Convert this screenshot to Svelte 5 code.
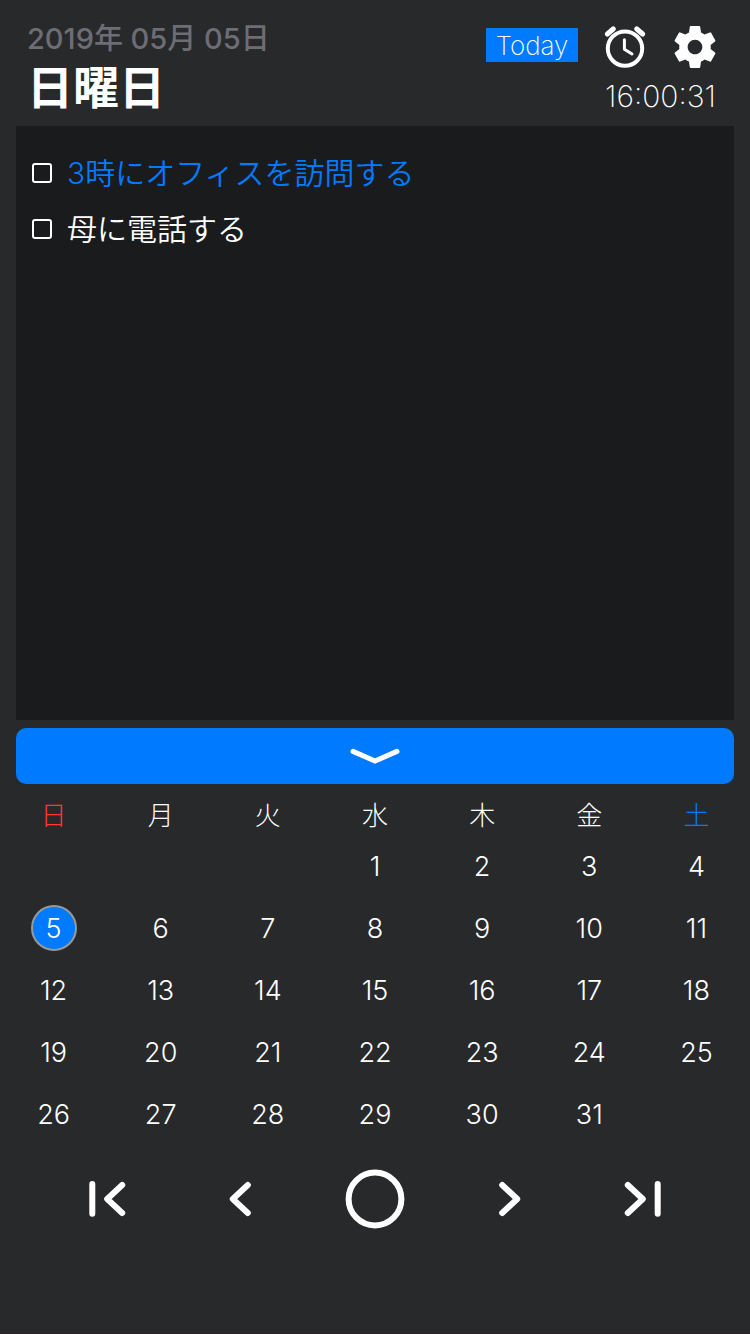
<script>
  const tasks = $state([
    { id: 1, text: '3時にオフィスを訪問する', highlighted: true, done: false },
    { id: 2, text: '母に電話する', highlighted: false, done: false }
  ]);

  const weekdays = ['日', '月', '火', '水', '木', '金', '土'];
  const leadingBlanks = 3;
  const cells = [
    ...Array.from({ length: leadingBlanks }, () => null),
    ...Array.from({ length: 31 }, (_, i) => i + 1),
    null
  ];
  const weeks = Array.from({ length: 5 }, (_, i) => cells.slice(i * 7, i * 7 + 7));

  let selected = $state(5);
</script>

<main class="app">
  <header class="header">
    <div class="date">
      <p class="full-date">2019年 05月 05日</p>
      <h1 class="weekday">日曜日</h1>
    </div>
    <div class="tools">
      <div class="actions">
        <button class="today" type="button">Today</button>
        <button class="icon-button" type="button" aria-label="アラーム">
          <svg width="42" height="42" viewBox="0 0 42 42" fill="none" stroke="#fff" stroke-linecap="round" stroke-linejoin="round">
            <circle cx="21" cy="22.6" r="17.2" stroke-width="4" />
            <path d="M20.4 13.8v9.4l7.6 4.8" stroke-width="3" />
            <path d="M3.4 8 9.2 3M38.6 8 32.8 3" stroke-width="5" />
          </svg>
        </button>
        <button class="icon-button" type="button" aria-label="設定">
          <svg width="42" height="42" viewBox="2 2 20 20" fill="#fff">
            <path d="M19.43 12.98c.04-.32.07-.64.07-.98s-.03-.66-.07-.98l2.11-1.65c.19-.15.24-.42.12-.64l-2-3.46c-.12-.22-.39-.3-.61-.22l-2.49 1c-.52-.4-1.08-.73-1.69-.98l-.38-2.65C14.46 2.18 14.25 2 14 2h-4c-.25 0-.46.18-.49.42l-.38 2.65c-.61.25-1.17.59-1.69.98l-2.49-1c-.23-.09-.49 0-.61.22l-2 3.46c-.13.22-.07.49.12.64l2.11 1.65c-.04.32-.07.65-.07.98s.03.66.07.98l-2.11 1.65c-.19.15-.24.42-.12.64l2 3.46c.12.22.39.3.61.22l2.49-1c.52.4 1.08.73 1.69.98l.38 2.65c.03.24.24.42.49.42h4c.25 0 .46-.18.49-.42l.38-2.65c.61-.25 1.17-.59 1.69-.98l2.49 1c.23.09.49 0 .61-.22l2-3.46c.12-.22.07-.49-.12-.64l-2.11-1.65zM12 15.5c-1.93 0-3.5-1.57-3.5-3.5s1.57-3.5 3.5-3.5 3.5 1.57 3.5 3.5-1.57 3.5-3.5 3.5z" />
          </svg>
        </button>
      </div>
      <time class="clock">16:00:31</time>
    </div>
  </header>

  <ul class="tasks">
    {#each tasks as task (task.id)}
      <li>
        <label class="task" class:highlighted={task.highlighted}>
          <input type="checkbox" bind:checked={task.done} />
          <span>{task.text}</span>
        </label>
      </li>
    {/each}
  </ul>

  <button class="collapse" type="button" aria-label="カレンダーを閉じる">
    <svg width="50" height="18" viewBox="0 0 50 18" fill="none" stroke="#fff" stroke-width="5" stroke-linecap="round" stroke-linejoin="miter">
      <path d="M3 4.4 25 14 47 4.4" />
    </svg>
  </button>

  <table class="calendar">
    <thead>
      <tr>
        {#each weekdays as name, i}
          <th class:sunday={i === 0} class:saturday={i === 6} scope="col">{name}</th>
        {/each}
      </tr>
    </thead>
    <tbody>
      {#each weeks as week}
        <tr>
          {#each week as day}
            <td>
              {#if day}
                <button class="day" class:selected={day === selected} type="button" onclick={() => (selected = day)}>{day}</button>
              {/if}
            </td>
          {/each}
        </tr>
      {/each}
    </tbody>
  </table>

  <nav class="pager">
    <button type="button" aria-label="前の年">
      <svg width="60" height="60" viewBox="0 0 60 60"><path d="M15.3 15v29.8M45.2 16 30.2 30l15 14" /></svg>
    </button>
    <button type="button" aria-label="前の月">
      <svg width="60" height="60" viewBox="0 0 60 60"><path d="M36.8 16 21.8 30l15 14" /></svg>
    </button>
    <button type="button" aria-label="今日">
      <svg width="60" height="60" viewBox="0 0 60 60"><circle cx="30" cy="30" r="26.4" /></svg>
    </button>
    <button type="button" aria-label="次の月">
      <svg width="60" height="60" viewBox="0 0 60 60"><path d="M23.2 16 38.2 30l-15 14" /></svg>
    </button>
    <button type="button" aria-label="次の年">
      <svg width="60" height="60" viewBox="0 0 60 60"><path d="M14.8 16 29.8 30l-15 14M44.7 15v29.8" /></svg>
    </button>
  </nav>
</main>

<style>
  :global(body) {
    background: #28292b;
  }

  .app {
    box-sizing: border-box;
    display: flex;
    flex-direction: column;
    min-height: 100vh;
    padding-bottom: 104px;
    border-bottom: 1px solid #2c2026;
    background: #28292b;
    color: #fff;
    font-family: Inter, 'Noto Sans CJK JP', sans-serif;
  }

  button {
    display: flex;
    align-items: center;
    justify-content: center;
    margin: 0;
    padding: 0;
    border: 0;
    background: none;
    color: inherit;
    font: inherit;
    cursor: pointer;
  }

  svg {
    display: block;
  }

  .header {
    display: flex;
    justify-content: space-between;
    padding: 24px 34px 6px 27px;
  }

  .full-date {
    margin: 0;
    color: #6d6d76;
    font-size: 29px;
    font-weight: 500;
    line-height: 30px;
  }

  .weekday {
    margin: 0;
    font-size: 46px;
    font-weight: 700;
    line-height: 66px;
  }

  .tools {
    display: flex;
    flex-direction: column;
    align-items: flex-end;
    padding-top: 2px;
  }

  .actions {
    display: flex;
    gap: 28px;
  }

  .today {
    width: 92px;
    height: 34px;
    margin: 2px -2px 0 0;
    background: #007aff;
    font-size: 26px;
    font-weight: 250;
  }

  .clock {
    padding-top: 12px;
    font-size: 30px;
    font-weight: 250;
    line-height: 32px;
  }

  .tasks {
    flex: 1;
    margin: 0 16px;
    padding: 19px 16px;
    background: #1a1b1d;
    list-style: none;
  }

  .task {
    display: flex;
    align-items: center;
    gap: 15px;
    height: 56px;
    font-size: 30px;
    font-weight: 350;
    line-height: 40px;
  }

  .highlighted {
    color: #007aff;
  }

  .task input {
    appearance: none;
    width: 20px;
    height: 20px;
    margin: 0;
    border: 2px solid #fff;
    border-radius: 3px;
  }

  .task input:checked {
    background: #007aff;
  }

  .collapse {
    height: 56px;
    margin: 8px 16px 0;
    border-radius: 10px;
    background: #007aff;
  }

  .calendar {
    width: 100%;
    margin-top: 13px;
    border-collapse: collapse;
    table-layout: fixed;
    text-align: center;
  }

  th {
    height: 38px;
    padding: 0;
    font-size: 26px;
    font-weight: 300;
    line-height: 38px;
  }

  .sunday {
    color: #ff3b30;
  }

  .saturday {
    color: #007aff;
  }

  tbody tr {
    height: 62px;
  }

  td {
    padding: 0;
  }

  .day {
    box-sizing: border-box;
    width: 46px;
    height: 46px;
    margin: 0 auto;
    border-radius: 50%;
    font-size: 27px;
    font-weight: 350;
  }

  .selected {
    border: 2px solid #999;
    background: #007aff;
  }

  .pager {
    display: grid;
    grid-template-columns: repeat(5, 1fr);
    justify-items: center;
    padding: 24px 40px 0;
  }

  .pager svg {
    fill: none;
    stroke: #fff;
    stroke-width: 6;
    stroke-linecap: round;
    stroke-linejoin: round;
  }
</style>
